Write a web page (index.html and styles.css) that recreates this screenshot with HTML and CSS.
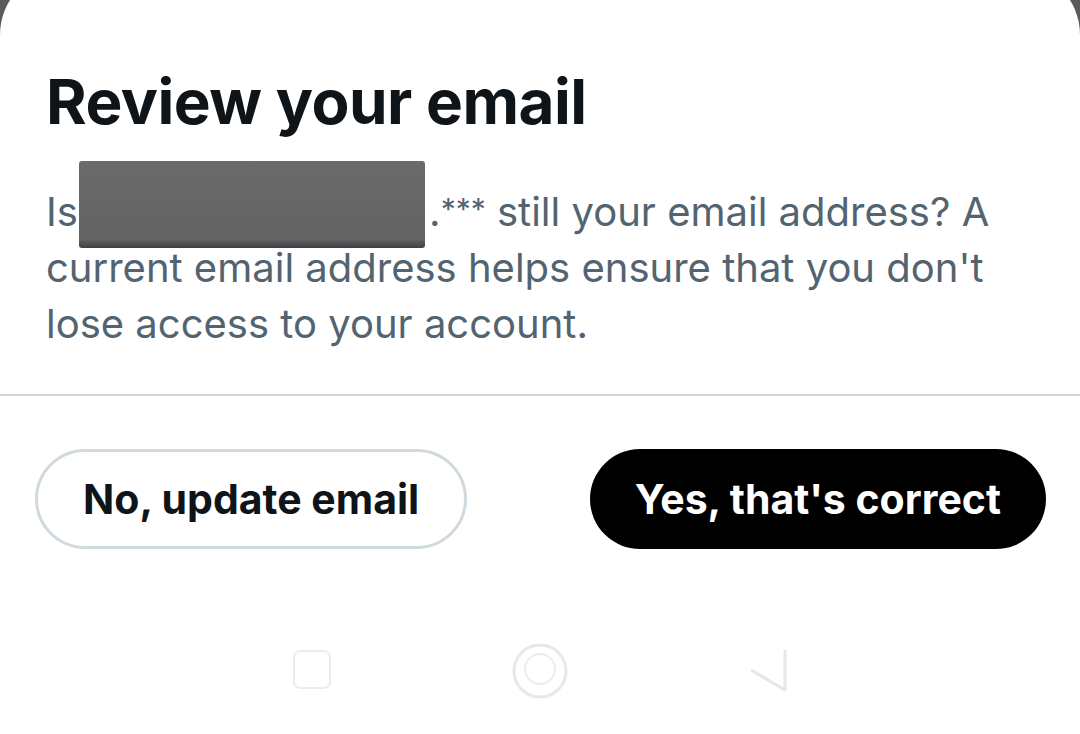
FILE: index.html
```html
<!DOCTYPE html>
<html lang="en">
<head>
    <meta charset="UTF-8">
    <meta name="viewport" content="width=device-width, initial-scale=1.0">
    <title>Review your email</title>
    <link rel="stylesheet" href="styles.css">
</head>
<body>
    <div class="sheet">
        <div class="sheet-body">
            <h1 class="title">Review your email</h1>
            <p class="message">Is <span class="masked"></span>.<span class="stars">***</span> still your email address? A current email address helps ensure that you don't lose access to your account.</p>
        </div>

        <div class="divider"></div>

        <div class="actions">
            <button class="btn btn-outline">No, update email</button>
            <button class="btn btn-solid">Yes, that's correct</button>
        </div>

        <!-- system navigation bar -->
        <div class="navbar">
            <svg class="nav-icon" width="44" height="46" viewBox="0 0 44 46">
                <rect x="3" y="3" width="36" height="37" rx="6" fill="#fff" stroke="#ececec" stroke-width="2"/>
            </svg>
            <svg class="nav-icon" width="60" height="60" viewBox="0 0 60 60">
                <circle cx="30" cy="30" r="26" fill="none" stroke="#e8e8e8" stroke-width="3"/>
                <circle cx="30" cy="28" r="15" fill="none" stroke="#ececec" stroke-width="2"/>
            </svg>
            <svg class="nav-icon" width="44" height="50" viewBox="0 0 44 50">
                <path d="M40 4 V44 L6 24" fill="none" stroke="#e6e6e6" stroke-width="3" stroke-linejoin="round"/>
            </svg>
        </div>
    </div>
</body>
</html>
```

FILE: styles.css
```css
body {
    margin: 0;
    background-color: #5b5b5b;
    font-family: Inter, 'Liberation Sans', Arial, sans-serif;
    overflow: hidden;
}
.sheet {
    margin-top: -31px;
    height: 765px;
    background-color: #fff;
    border-radius: 66px 66px 0 0;
}
.sheet-body {
    padding: 95px 46px 0 46px;
}
.title {
    margin: 0;
    font-size: 62px;
    line-height: 76px;
    font-weight: 700;
    color: #0f1419;
    letter-spacing: -0.5px;
}
.message {
    margin: 44px 0 0 0;
    font-size: 40px;
    line-height: 56px;
    color: #536471;
}
.stars {
    position: relative;
    top: -6px;
    font-size: 30px;
    line-height: 0;
}
.masked {
    display: inline-block;
    position: relative;
    width: 340px;
    height: 1px;
}
.masked::before {
    content: "";
    position: absolute;
    left: -10px;
    bottom: -22px;
    width: 346px;
    height: 87px;
    border-radius: 3px;
    background: linear-gradient(180deg, #6a6a6a 0%, #636363 90%, #3e3e46 100%);
}
.divider {
    margin-top: 42px;
    height: 2px;
    background-color: #cfd9de;
}
.actions {
    display: flex;
    justify-content: space-between;
    padding: 53px 34px 0 35px;
}
.btn {
    height: 100px;
    padding: 0 45px;
    border-radius: 50px;
    font-family: inherit;
    font-size: 41px;
    font-weight: 700;
    cursor: pointer;
}
.btn-outline {
    background-color: #fff;
    color: #0f1419;
    border: 3px solid #cfd9de;
}
.btn-solid {
    background-color: #000;
    color: #fff;
    border: none;
}
.navbar {
    display: flex;
    justify-content: center;
    align-items: center;
    gap: 175px;
    margin-top: 92px;
}
.nav-icon {
    display: block;
}
```
